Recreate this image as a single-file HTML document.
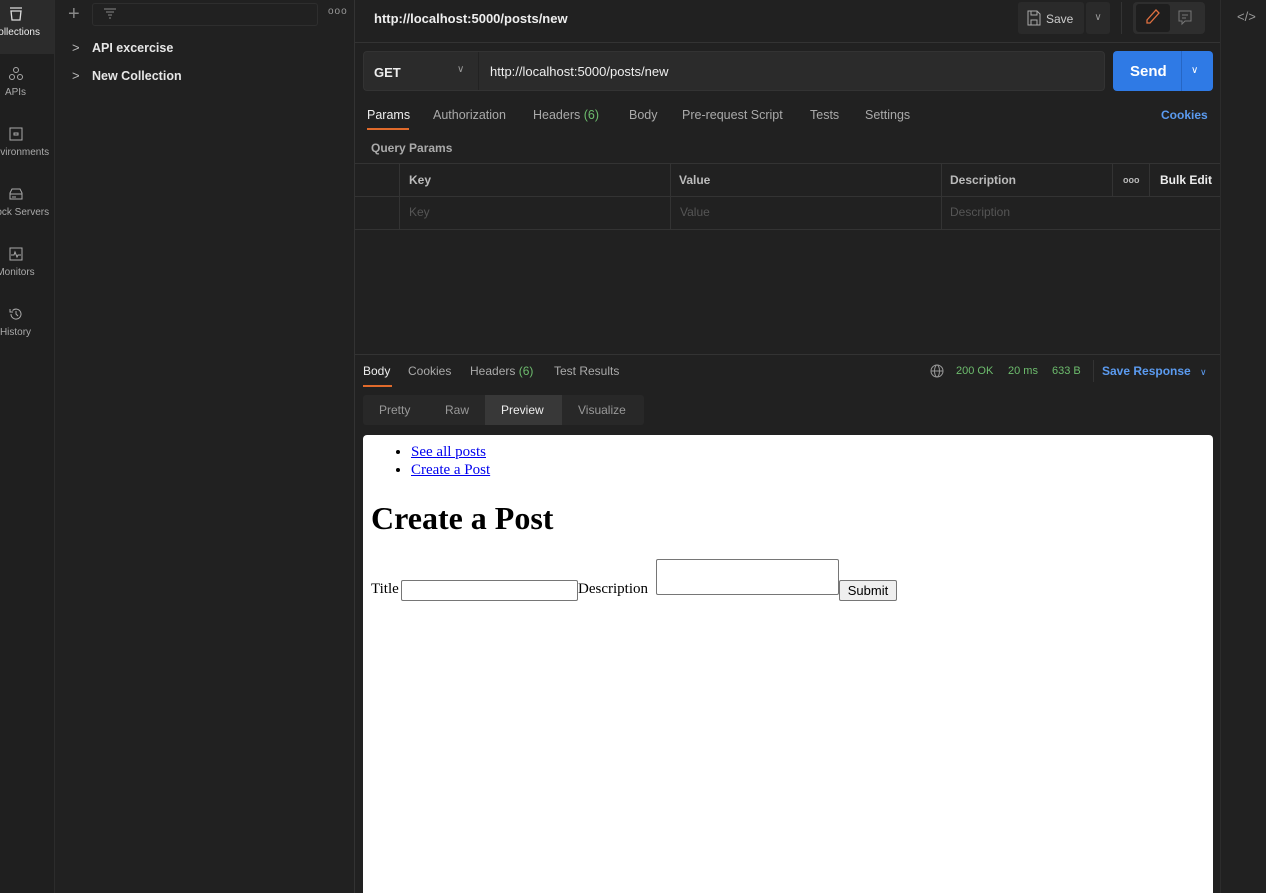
<!DOCTYPE html>
<html><head><style>
*{box-sizing:border-box;margin:0;padding:0}
body{width:1266px;height:893px;background:#212121;font-family:"Liberation Sans",sans-serif;color:#ddd;position:relative;overflow:hidden;font-size:13px}
.a{position:absolute}
.nav{left:0;top:0;width:55px;height:893px;background:#1f1f1f;border-right:1px solid #2c2c2c;overflow:hidden}
.nv{position:absolute;left:-12px;width:55px;text-align:center;font-size:10px;color:#aaa;white-space:nowrap}
.nv svg{display:block;margin:0 auto 5px}
.side{left:55px;top:0;width:300px;height:893px;background:#212121;border-right:1px solid #333}
.g{color:#6dbc6d}
.tab{position:absolute;top:108px;font-size:12.5px;color:#aaa}
.th{position:absolute;top:173px;font-size:12px;font-weight:bold;color:#bbb}
.tp{position:absolute;top:205px;font-size:12px;color:#555}
</style></head><body>
<div class="a nav">
 <div class="a" style="left:0;top:0;width:55px;height:54px;background:#2b2b2b"></div>
 <div class="nv" style="top:6px;color:#eee"><svg width="16" height="16" viewBox="0 0 16 16" fill="none" stroke="#ddd" stroke-width="1.3"><path d="M2 2h12M3 5h10l-1 9H4z"/></svg>Collections</div>
 <div class="nv" style="top:66px"><svg width="16" height="16" viewBox="0 0 16 16" fill="none" stroke="#aaa"><circle cx="8" cy="4" r="2.5"/><circle cx="4" cy="11" r="2.5"/><circle cx="12" cy="11" r="2.5"/></svg>APIs</div>
 <div class="nv" style="top:126px"><svg width="16" height="16" viewBox="0 0 16 16" fill="none" stroke="#aaa"><rect x="2" y="2" width="12" height="12"/><path d="M6 7h4v2H6z"/></svg>Environments</div>
 <div class="nv" style="top:186px"><svg width="16" height="16" viewBox="0 0 16 16" fill="none" stroke="#aaa"><path d="M2 7l2-4h8l2 4v6H2zM2 8h12M5 10v2M7 10v2"/></svg>Mock Servers</div>
 <div class="nv" style="top:246px"><svg width="16" height="16" viewBox="0 0 16 16" fill="none" stroke="#aaa"><rect x="2" y="2" width="12" height="12"/><path d="M3 9h3l1-3 2 5 1-2h3"/></svg>Monitors</div>
 <div class="nv" style="top:306px"><svg width="16" height="16" viewBox="0 0 16 16" fill="none" stroke="#aaa"><path d="M3 8a5 5 0 1 0 1.5-3.5M2 3v3h3M8 5v3l2 2"/></svg>History</div>
</div>
<div class="a side">
 <div class="a" style="left:13px;top:3px;font-size:20px;color:#888">+</div>
 <div class="a" style="left:37px;top:3px;width:226px;height:23px;border:1px solid #2e2e2e;border-radius:3px"></div>
 <svg class="a" style="left:48px;top:7px" width="14" height="14" viewBox="0 0 14 14" stroke="#888"><path d="M1 2h12M3 5h8M5 8h4M6 11h2"/></svg>
 <div class="a" style="left:273px;top:6px;font-size:10px;color:#999;letter-spacing:1px">ooo</div>
 <div class="a" style="left:17px;top:40px;font-size:13px;color:#bbb">&gt;</div>
 <div class="a" style="left:37px;top:41px;font-size:12.5px;font-weight:bold;color:#e6e6e6">API excercise</div>
 <div class="a" style="left:17px;top:68px;font-size:13px;color:#bbb">&gt;</div>
 <div class="a" style="left:37px;top:69px;font-size:12.5px;font-weight:bold;color:#e6e6e6">New Collection</div>
</div>
<!-- header -->
<div class="a" style="left:374px;top:11px;font-size:13px;font-weight:bold;color:#eee">http://localhost:5000/posts/new</div>
<div class="a" style="left:1018px;top:2px;width:66px;height:32px;background:#2a2a2a;border-radius:3px;font-size:12px;color:#ccc;padding:10px 0 0 28px">Save</div>
<svg class="a" style="left:1027px;top:10px" width="14" height="16" viewBox="0 0 14 16" fill="none" stroke="#aaa"><path d="M1 1h9l3 3v11H1zM4 1v4h6V1M4 15v-5h6v5"/></svg>
<div class="a" style="left:1086px;top:2px;width:24px;height:32px;background:#2a2a2a;border-radius:3px;color:#999;font-size:10px;text-align:center;padding-top:10px">∨</div>
<div class="a" style="left:1121px;top:2px;width:1px;height:32px;background:#333"></div>
<div class="a" style="left:1133px;top:2px;width:72px;height:32px;background:#2e2e2e;border-radius:4px"></div>
<div class="a" style="left:1136px;top:4px;width:34px;height:28px;background:#1e1e1e;border-radius:3px"></div>
<svg class="a" style="left:1146px;top:9px" width="14" height="16" viewBox="0 0 14 16" fill="none" stroke="#e07040" stroke-width="1.3"><path d="M10 1l3 3-9 10H1v-3z"/></svg>
<svg class="a" style="left:1178px;top:10px" width="14" height="16" viewBox="0 0 14 16" fill="none" stroke="#777"><path d="M1 1h12v10H7l-3 3v-3H1zM4 5h6M4 8h4"/></svg>
<div class="a" style="left:355px;top:42px;width:865px;height:1px;background:#333"></div>
<div class="a" style="left:1220px;top:0;width:1px;height:893px;background:#2c2c2c"></div>
<div class="a" style="left:1237px;top:9px;font-size:13px;color:#999">&lt;/&gt;</div>
<!-- url bar -->
<div class="a" style="left:363px;top:51px;width:742px;height:40px;background:#2b2b2b;border:1px solid #333;border-radius:4px"></div>
<div class="a" style="left:478px;top:52px;width:1px;height:38px;background:#222"></div>
<div class="a" style="left:374px;top:65px;font-size:13px;font-weight:bold;color:#eee">GET</div>
<div class="a" style="left:457px;top:64px;font-size:10px;color:#999">∨</div>
<div class="a" style="left:490px;top:64px;font-size:13px;color:#eee">http://localhost:5000/posts/new</div>
<div class="a" style="left:1113px;top:51px;width:100px;height:40px;background:#2f7ae5;border-radius:4px"></div>
<div class="a" style="left:1181px;top:51px;width:1px;height:40px;background:#2666c4"></div>
<div class="a" style="left:1130px;top:63px;font-size:15px;font-weight:bold;color:#fff">Send</div>
<div class="a" style="left:1191px;top:65px;font-size:10px;color:#fff">∨</div>
<!-- tabs -->
<div class="tab" style="left:367px;color:#eee">Params</div>
<div class="a" style="left:367px;top:128px;width:42px;height:2px;background:#e06a2b"></div>
<div class="tab" style="left:433px">Authorization</div>
<div class="tab" style="left:533px">Headers <span class="g">(6)</span></div>
<div class="tab" style="left:629px">Body</div>
<div class="tab" style="left:682px">Pre-request Script</div>
<div class="tab" style="left:810px">Tests</div>
<div class="tab" style="left:865px">Settings</div>
<div class="tab" style="left:1161px;color:#5b9bf0;font-weight:bold;font-size:12px;top:108px">Cookies</div>
<div class="a" style="left:371px;top:141px;font-size:12px;font-weight:bold;color:#aaa">Query Params</div>
<!-- table -->
<div class="a" style="left:355px;top:163px;width:865px;height:1px;background:#333"></div>
<div class="a" style="left:355px;top:196px;width:865px;height:1px;background:#333"></div>
<div class="a" style="left:355px;top:229px;width:865px;height:1px;background:#333"></div>
<div class="a" style="left:399px;top:163px;width:1px;height:66px;background:#333"></div>
<div class="a" style="left:670px;top:163px;width:1px;height:66px;background:#333"></div>
<div class="a" style="left:941px;top:163px;width:1px;height:66px;background:#333"></div>
<div class="a" style="left:1112px;top:163px;width:1px;height:33px;background:#333"></div>
<div class="a" style="left:1149px;top:163px;width:1px;height:33px;background:#333"></div>
<div class="th" style="left:409px">Key</div>
<div class="th" style="left:679px">Value</div>
<div class="th" style="left:950px">Description</div>
<div class="th" style="left:1123px;font-size:9px;top:175px">ooo</div>
<div class="th" style="left:1160px;color:#eee">Bulk Edit</div>
<div class="tp" style="left:409px">Key</div>
<div class="tp" style="left:680px">Value</div>
<div class="tp" style="left:950px">Description</div>
<!-- response -->
<div class="a" style="left:355px;top:354px;width:865px;height:1px;background:#333"></div>
<div class="a" style="left:363px;top:364px;font-size:12px;color:#eee">Body</div>
<div class="a" style="left:363px;top:385px;width:29px;height:2px;background:#e06a2b"></div>
<div class="a" style="left:408px;top:364px;font-size:12px;color:#aaa">Cookies</div>
<div class="a" style="left:470px;top:364px;font-size:12px;color:#aaa">Headers <span class="g">(6)</span></div>
<div class="a" style="left:554px;top:364px;font-size:12px;color:#aaa">Test Results</div>
<svg class="a" style="left:930px;top:364px" width="14" height="14" viewBox="0 0 14 14" fill="none" stroke="#999"><circle cx="7" cy="7" r="6"/><ellipse cx="7" cy="7" rx="2.5" ry="6"/><path d="M1 7h12"/></svg>
<div class="a g" style="left:956px;top:365px;font-size:11px">200 OK</div>
<div class="a g" style="left:1008px;top:365px;font-size:11px">20 ms</div>
<div class="a g" style="left:1052px;top:365px;font-size:11px">633 B</div>
<div class="a" style="left:1093px;top:360px;width:1px;height:22px;background:#333"></div>
<div class="a" style="left:1102px;top:364px;font-size:12px;font-weight:bold;color:#5b9bf0">Save Response <span style="font-size:9px;font-weight:normal;margin-left:6px">∨</span></div>
<div class="a" style="left:363px;top:395px;width:281px;height:30px;background:#282828;border-radius:3px"></div>
<div class="a" style="left:485px;top:395px;width:77px;height:30px;background:#383838"></div>
<div class="a" style="left:379px;top:403px;font-size:12px;color:#999">Pretty</div>
<div class="a" style="left:445px;top:403px;font-size:12px;color:#999">Raw</div>
<div class="a" style="left:501px;top:403px;font-size:12px;color:#eee">Preview</div>
<div class="a" style="left:578px;top:403px;font-size:12px;color:#999">Visualize</div>
<!-- preview -->
<div class="a" style="left:363px;top:435px;width:850px;height:458px;background:#fff;border-radius:4px 4px 0 0;font-family:'Liberation Serif',serif;color:#000;font-size:15px">
 <ul style="position:absolute;left:48px;top:8px;line-height:18px">
  <li><a style="color:#0000ee;text-decoration:underline">See all posts</a></li>
  <li><a style="color:#0000ee;text-decoration:underline">Create a Post</a></li>
 </ul>
 <div style="position:absolute;left:8px;top:65px;font-size:32px;font-weight:bold">Create a Post</div>
 <div style="position:absolute;left:8px;top:146px">Title</div>
 <div style="position:absolute;left:38px;top:145px;width:177px;height:21px;border:1px solid #767676;border-radius:2px"></div>
 <div style="position:absolute;left:215px;top:146px">Description</div>
 <div style="position:absolute;left:293px;top:124px;width:183px;height:36px;border:1px solid #767676;border-radius:2px"></div>
 <div style="position:absolute;left:476px;top:145px;width:58px;height:21px;border:1px solid #767676;border-radius:2px;background:#efefef;font-family:'Liberation Sans',sans-serif;font-size:13px;text-align:center;padding-top:2px">Submit</div>
</div>
</body></html>
